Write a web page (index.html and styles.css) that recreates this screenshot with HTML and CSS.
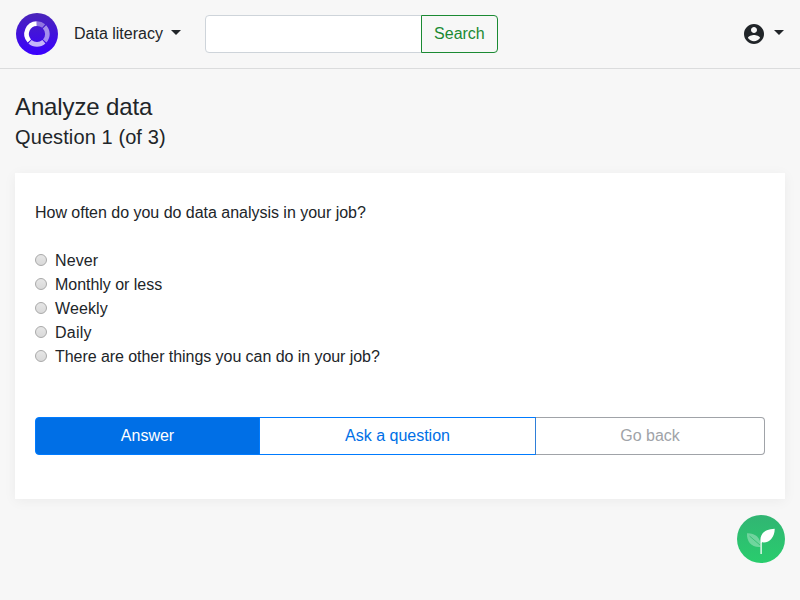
FILE: index.html
```html
<!DOCTYPE html>
<html lang="en">
<head>
<meta charset="utf-8">
<title>Analyze data</title>
<link rel="stylesheet" href="styles.css">
</head>
<body>
<header class="navbar">
  <svg class="logo" viewBox="0 0 42 42" width="42" height="42">
    <defs>
      <linearGradient id="violet" x1="0" y1="0" x2="0" y2="1"><stop offset="0" stop-color="#4a25b8"/><stop offset="1" stop-color="#3a00ff"/></linearGradient>
    </defs>
    <circle cx="21" cy="21" r="21" fill="url(#violet)"/>
    <g fill="none" stroke="#fff" stroke-width="4.6">
      <path d="M13.300 28A10.400 10.400 0 0 1 20.700 10.600"/>
      <path d="M21 10.600A10.400 10.400 0 0 1 27.700 13" opacity=".4"/>
      <path d="M28.500 13.800A10.400 10.400 0 0 1 28.700 28" opacity=".52"/>
      <path d="M27.900 28.800A10.400 10.400 0 0 1 14 28.700" opacity=".7"/>
    </g>
  </svg>
  <a class="menu">Data literacy<span class="caret"></span></a>
  <form class="search">
    <input class="field" type="text" aria-label="Search">
    <button class="search-btn" type="button">Search</button>
  </form>
  <a class="account">
    <svg viewBox="0 0 24 24" width="24" height="24" fill="#212529"><path d="M12 2C6.480 2 2 6.480 2 12s4.480 10 10 10 10-4.480 10-10S17.520 2 12 2zm0 3c1.660 0 3 1.340 3 3s-1.340 3-3 3-3-1.340-3-3 1.340-3 3-3zm0 14.200c-2.500 0-4.710-1.280-6-3.220.030-1.990 4-3.080 6-3.080 1.990 0 5.970 1.090 6 3.080-1.290 1.940-3.500 3.220-6 3.220z"/></svg>
    <span class="caret"></span>
  </a>
</header>
<main class="content">
  <h4 class="title">Analyze data</h4>
  <h5 class="subtitle">Question 1 (of 3)</h5>
  <section class="card">
    <p class="question">How often do you do data analysis in your job?</p>
    <div class="options">
      <label class="option"><input class="radio" type="radio" name="q">Never</label>
      <label class="option"><input class="radio" type="radio" name="q">Monthly or less</label>
      <label class="option"><input class="radio" type="radio" name="q">Weekly</label>
      <label class="option"><input class="radio" type="radio" name="q">Daily</label>
      <label class="option long"><input class="radio" type="radio" name="q">There are other things you can do in your job?</label>
    </div>
    <div class="actions">
      <button class="btn answer">Answer</button>
      <button class="btn ask">Ask a question</button>
      <button class="btn back">Go back</button>
    </div>
  </section>
  <a class="sprout" aria-label="Help">
    <svg viewBox="0 0 48 48" width="48" height="48">
      <defs>
        <linearGradient id="green" x1="0" y1="0" x2="0" y2="1"><stop offset="0" stop-color="#31b573"/><stop offset="1" stop-color="#29cd6d"/></linearGradient>
      </defs>
      <circle cx="24" cy="24" r="24" fill="url(#green)"/>
      <path d="M10 18.300C17 18 24 21.500 23.700 32C15 33 9.500 27 10 18.300z" fill="#fff" opacity=".32"/>
      <path d="M12.500 21L23.300 30.300" stroke="#2bbd6c" stroke-width=".8" fill="none"/>
      <path d="M37.700 13.700C29 14 23.500 17.500 23.400 25V39H24.900V27.300C32.500 28.500 37.800 22 37.700 13.700z" fill="#fff"/>
      <path d="M23.400 28H24.900V39H23.400z" fill="#2bc56d" opacity=".2"/>
    </svg>
  </a>
</main>
</body>
</html>
```
FILE: styles.css
```css
* { box-sizing: border-box; }
body {
  margin: 0;
  background: #f7f7f7;
  color: #212529;
  font: 16px/24px "Liberation Sans", sans-serif;
}
.navbar {
  display: flex;
  align-items: center;
  height: 69px;
  padding: 0 16px;
  border-bottom: 1px solid #dbdcdd;
}
.logo { display: block; }
.menu { margin-left: 16px; white-space: nowrap; }
.caret {
  display: inline-block;
  border: 5px solid transparent;
  border-top-color: #212529;
  border-bottom: 0;
}
.menu .caret { margin-left: 8px; vertical-align: 4px; }
.search { display: flex; margin-left: 24px; }
.field {
  width: 217px;
  height: 38px;
  border: 1px solid #ced4da;
  border-radius: 4px 0 0 4px;
  background: #fff;
  padding: 6px 12px;
}
.search-btn {
  width: 77px;
  height: 38px;
  margin-left: -1px;
  padding: 0;
  border: 1px solid #1b8a33;
  border-radius: 0 4px 4px 0;
  background: transparent;
  color: #1b8a33;
  font: inherit;
}
.account { display: flex; align-items: center; margin-left: auto; }
.account .caret { margin: -3px 0 0 8px; }
.content { padding: 23px 15px 0; }
.title { margin: 0; font-size: 24px; font-weight: 400; line-height: 29px; letter-spacing: -.12px; }
.subtitle { margin: 4px 0 24px; font-size: 20px; font-weight: 400; line-height: 24px; letter-spacing: .1px; }
.card {
  height: 326px;
  padding: 28px 20px 0;
  background: #fff;
  box-shadow: 0 2px 12px rgba(0, 0, 0, .05);
}
.question { margin: 0 0 24px; letter-spacing: -.02px; }
.option { display: flex; align-items: center; height: 24px; letter-spacing: .1px; }
.option:nth-child(2) { letter-spacing: -.03px; }
.option:nth-child(4) { letter-spacing: .25px; }
.option.long { letter-spacing: -.055px; }
.radio {
  appearance: none;
  width: 12px;
  height: 12px;
  margin: -2px 8px 0 0;
  border: 1px solid #a9a9a9;
  border-radius: 50%;
  background: linear-gradient(#e6e6e6, #d9d9d9);
}
.actions { display: flex; margin-top: 48px; }
.btn {
  height: 38px;
  padding: 0;
  border: 1px solid #007bff;
  background: transparent;
  font: inherit;
}
.answer { width: 225px; border-radius: 4px 0 0 4px; background: #006fe6; color: #fff; }
.ask { width: 277px; margin-left: -1px; border-right-color: #2f7fd8; color: #006fe6; }
.back { width: 229px; border-color: #a0a3a8; border-left: 0; border-radius: 0 4px 4px 0; color: #a0a3a8; }
.sprout { display: block; width: 48px; height: 48px; margin: 16px 0 0 auto; }
.sprout svg { display: block; }
```
